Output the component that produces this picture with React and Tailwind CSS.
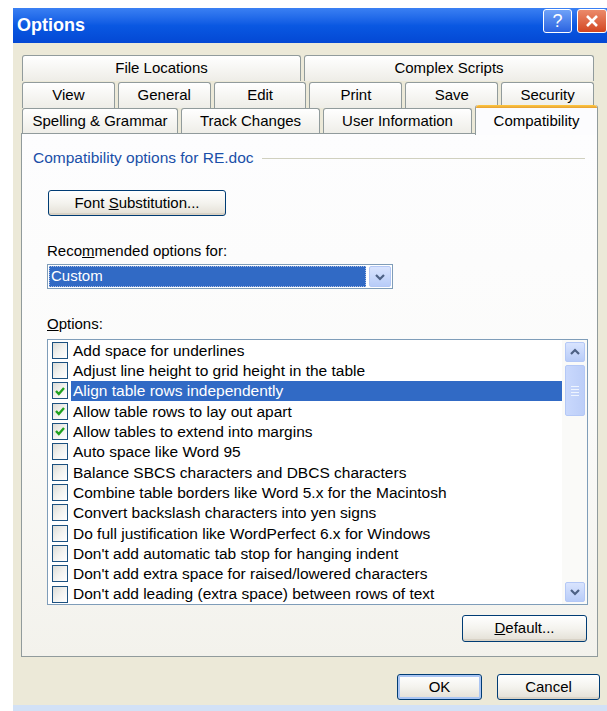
import React from 'react';

const tabRows = [
  [
    { label: 'File Locations', w: 'w-[279px]' },
    { label: 'Complex Scripts', w: 'flex-1' },
  ],
  [
    { label: 'View', w: 'flex-1' },
    { label: 'General', w: 'flex-1' },
    { label: 'Edit', w: 'flex-1' },
    { label: 'Print', w: 'flex-1' },
    { label: 'Save', w: 'flex-1' },
    { label: 'Security', w: 'flex-1' },
  ],
];

const frontTabs = [
  { label: 'Spelling & Grammar', w: 'w-[156px]' },
  { label: 'Track Changes', w: 'w-[139px]' },
  { label: 'User Information', w: 'w-[149px]' },
];

const options = [
  { label: 'Add space for underlines', checked: false },
  { label: 'Adjust line height to grid height in the table', checked: false },
  { label: 'Align table rows independently', checked: true, selected: true },
  { label: 'Allow table rows to lay out apart', checked: true },
  { label: 'Allow tables to extend into margins', checked: true },
  { label: 'Auto space like Word 95', checked: false },
  { label: 'Balance SBCS characters and DBCS characters', checked: false },
  { label: 'Combine table borders like Word 5.x for the Macintosh', checked: false },
  { label: 'Convert backslash characters into yen signs', checked: false },
  { label: 'Do full justification like WordPerfect 6.x for Windows', checked: false },
  { label: "Don't add automatic tab stop for hanging indent", checked: false },
  { label: "Don't add extra space for raised/lowered characters", checked: false },
  { label: "Don't add leading (extra space) between rows of text", checked: false },
];

function Tab({ label, w }) {
  return (
    <div
      className={`${w} flex h-full items-center justify-center rounded-t-[3px] border border-b-0 border-[#919B9C] bg-gradient-to-b from-white to-[#EEEDE7] text-[15px] text-black`}
    >
      {label}
    </div>
  );
}

function XpButton({ children, className = '', isDefault = false }) {
  return (
    <div
      className={`flex items-center justify-center rounded-[3px] border border-[#003C74] bg-gradient-to-b from-white via-[#F4F3EE] to-[#E3DFD5] text-[15px] text-black ${
        isDefault ? 'shadow-[inset_0_0_0_2px_#AAC5F3]' : 'shadow-[inset_0_-2px_0_#D8D2C6]'
      } ${className}`}
    >
      {children}
    </div>
  );
}

function Checkbox({ checked }) {
  return (
    <div className="flex h-[17px] w-[16px] shrink-0 items-center justify-center border border-[#1C5180] bg-gradient-to-br from-[#DCDCD7] via-[#F2F2EF] to-white">
      {checked && (
        <svg width="12" height="12" viewBox="0 0 12 12">
          <path d="M2 6 L4.8 9 L10 3" fill="none" stroke="#21A121" strokeWidth="2.4" />
        </svg>
      )}
    </div>
  );
}

function ScrollArrow({ down }) {
  return (
    <div className="flex h-[20px] w-[20px] items-center justify-center rounded-[2px] border border-[#B4C8F6] bg-gradient-to-b from-[#D9E4FE] to-[#B8CCF8]">
      <svg width="12" height="8" viewBox="0 0 12 8">
        <path
          d={down ? 'M2 2 L6 6 L10 2' : 'M2 6 L6 2 L10 6'}
          fill="none"
          stroke="#4D6185"
          strokeWidth="2.2"
        />
      </svg>
    </div>
  );
}

export default function App() {
  return (
    <div className="flex h-[711px] w-[607px] flex-col overflow-hidden bg-white pt-2 pl-[13px] font-['Liberation_Sans',Arial,sans-serif]">
      {/* title bar */}
      <div className="flex h-[35px] shrink-0 items-start bg-gradient-to-b from-[#3A80F3] via-[#0A58E2] to-[#0448D4] pl-[4px]">
        <span className="mt-[7px] text-[18px] font-bold leading-[20px] text-white">Options</span>
        <div className="ml-auto mt-px flex gap-[5px]">
          <div className="flex h-[24px] w-[29px] items-center justify-center rounded-[3px] border border-white bg-gradient-to-b from-[#6FA2F8] to-[#2A62E0] text-[18px] leading-none text-white">
            ?
          </div>
          <div className="flex h-[24px] w-[30px] items-center justify-center rounded-[3px] border border-white bg-gradient-to-b from-[#EB8A6A] to-[#D2451F]">
            <svg width="14" height="14" viewBox="0 0 14 14">
              <path d="M2 2 L12 12 M12 2 L2 12" stroke="white" strokeWidth="2.6" />
            </svg>
          </div>
        </div>
      </div>

      {/* dialog body */}
      <div className="flex flex-1 flex-col bg-[#ECE9D8] pt-[12px] pl-[8px] pr-[9px]">
        {tabRows.map((row, i) => (
          <div key={i} className={`flex h-[26px] gap-[3px] pl-px pr-[4px] ${i === 1 ? 'mt-px' : ''}`}>
            {row.map((t) => (
              <Tab key={t.label} {...t} />
            ))}
          </div>
        ))}
        <div className="-mt-[3px] flex h-[29px] items-end gap-[3px] pl-px">
          {frontTabs.map((t) => (
            <div key={t.label} className={`${t.w} h-[26px]`}>
              <Tab label={t.label} w="w-full" />
            </div>
          ))}
          <div className="relative z-10 flex h-[30px] flex-1 -mb-px flex-col rounded-t-[3px] border-x border-[#919B9C] bg-[#FCFCFE]">
            <div className="h-[3px] rounded-t-[3px] bg-gradient-to-b from-[#FFC83C] to-[#E6A035]" />
            <div className="flex flex-1 items-center justify-center text-[15px] text-black">Compatibility</div>
          </div>
        </div>

        {/* compatibility page */}
        <div className="relative z-0 -mt-px flex h-[524px] flex-col border border-[#919B9C] bg-gradient-to-b from-[#FDFDFE] via-[#FBFBFA] to-[#F3F2EC] pt-[15px] pl-[11px] pr-[9px]">
          <div className="mr-[3px] flex items-center gap-[8px]">
            <span className="text-[15.5px] leading-[18px] text-[#1A4FA8]">Compatibility options for RE.doc</span>
            <div className="h-px flex-1 bg-[#D0D0BF]" />
          </div>

          <div className="ml-[14px] flex flex-1 flex-col">
            <XpButton className="mt-[23px] ml-px h-[26px] w-[178px]">
              Font&nbsp;<span className="underline">S</span>ubstitution...
            </XpButton>

            <div className="mt-[26px] text-[15px] leading-[18px] text-black">
              Reco<span className="underline">m</span>mended options for:
            </div>
            <div className="mt-[4px] flex h-[25px] w-[346px] items-center gap-[3px] border border-[#7F9DB9] bg-white p-px">
              <div className="flex h-full flex-1 items-center bg-[#316AC5] pl-[2px] text-[15px] text-white outline-1 outline-dotted outline-offset-[-1px] outline-[#A9BDE2]">
                Custom
              </div>
              <div className="flex h-full w-[22px] items-center justify-center rounded-[2px] border border-[#B4C8F6] bg-gradient-to-b from-[#D9E4FE] to-[#B8CCF8]">
                <svg width="12" height="8" viewBox="0 0 12 8">
                  <path d="M2 2 L6 6 L10 2" fill="none" stroke="#4D6185" strokeWidth="2.2" />
                </svg>
              </div>
            </div>

            <div className="mt-[26px] text-[15px] leading-[18px] text-black">
              <span className="underline">O</span>ptions:
            </div>

            {/* options list */}
            <div className="mt-[6px] flex h-[266px] border border-[#7F9DB9] bg-white">
              <div className="flex flex-1 flex-col overflow-hidden pl-[4px]">
                {options.map((o) => (
                  <div key={o.label} className="flex h-[20.33px] shrink-0 items-center gap-[3px]">
                    <Checkbox checked={o.checked} />
                    <div
                      className={`flex h-full flex-1 items-center pl-[2px] text-[15.5px] ${
                        o.selected ? 'bg-[#316AC5] text-white' : 'text-black'
                      }`}
                    >
                      {o.label}
                    </div>
                  </div>
                ))}
              </div>
              <div className="flex w-[25px] flex-col items-center bg-[#FAFAF8] py-[2px] pl-px">
                <ScrollArrow />
                <div className="mt-[3px] flex h-[51px] w-[20px] flex-col items-center justify-center gap-[2px] rounded-[2px] border border-[#B4C8F6] bg-gradient-to-r from-[#C9D8FC] to-[#BCCEF8]">
                  <div className="h-px w-[8px] bg-[#EEF4FE]" />
                  <div className="h-px w-[8px] bg-[#EEF4FE]" />
                  <div className="h-px w-[8px] bg-[#EEF4FE]" />
                  <div className="h-px w-[8px] bg-[#EEF4FE]" />
                </div>
                <div className="flex-1" />
                <ScrollArrow down />
              </div>
            </div>

            <XpButton className="mt-[10px] mr-px h-[27px] w-[125px] self-end">
              <span className="underline">D</span>efault...
            </XpButton>
          </div>
        </div>

        <div className="mt-[17px] flex justify-end gap-[15px] pr-0 -mr-[2px]">
          <XpButton isDefault className="h-[26px] w-[85px]">
            OK
          </XpButton>
          <XpButton className="h-[26px] w-[103px]">Cancel</XpButton>
        </div>
      </div>

      <div className="h-[6px] shrink-0 bg-[#D2E1F6]" />
    </div>
  );
}
